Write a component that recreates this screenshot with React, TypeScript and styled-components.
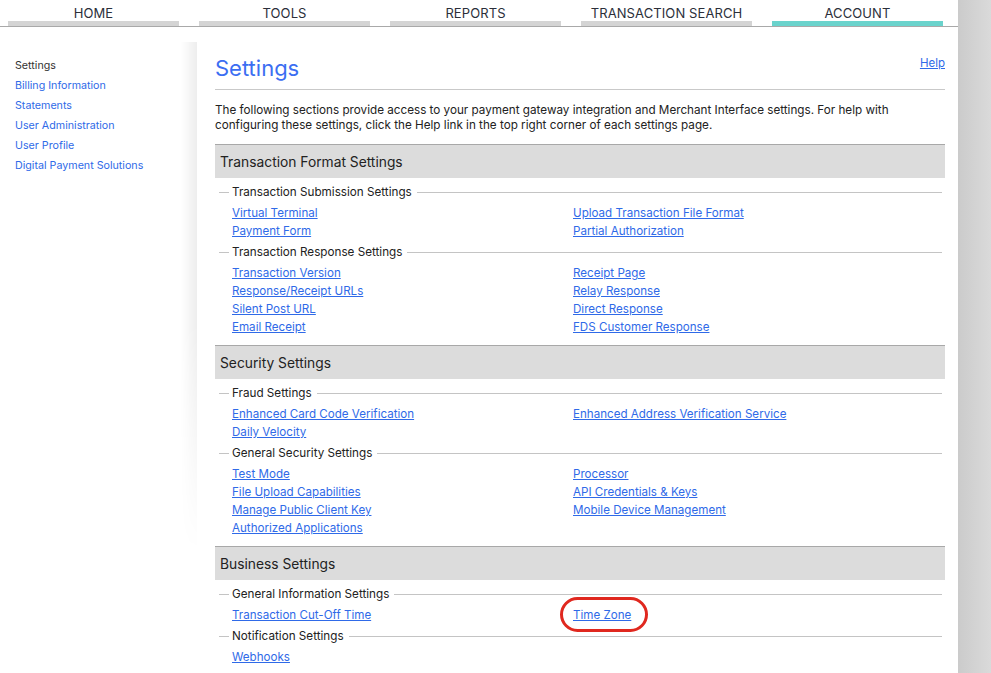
import React from "react";
import styled, { createGlobalStyle } from "styled-components";

const Global = createGlobalStyle`
  html, body { margin: 0; padding: 0; }
  body {
    font-family: Inter, "Noto Sans", "Liberation Sans", sans-serif;
    color: #222;
    background: #fff;
  }
`;

const Shell = styled.div`
  display: flex;
  min-height: 100vh;
`;

const Page = styled.div`
  width: 958px;
  flex: none;
  background: #fff;
`;

const Gutter = styled.div`
  flex: 1;
  background: linear-gradient(to right, #cbcbcb, #dadada);
`;

const Nav = styled.nav`
  display: flex;
  gap: 20px;
  padding-left: 8px;
  border-bottom: 1px solid #a9a9a9;
  height: 26px;
`;

const Tab = styled.div<{ $active?: boolean }>`
  width: 171px;
  height: 26px;
  box-sizing: border-box;
  border-bottom: 5px solid ${(p) => (p.$active ? "#6ad3cc" : "#d4d4d4")};
  display: flex;
  align-items: center;
  justify-content: center;
  padding-top: 4px;
  font-size: 13px;
  color: #2b2f3a;
  letter-spacing: 0.1px;
`;

const Body = styled.div`
  display: flex;
  margin-top: 15px;
`;

const Sidebar = styled.aside`
  width: 197px;
  flex: none;
  box-sizing: border-box;
  padding: 14px 0 0 15px;
  position: relative;
  min-height: 510px;
  &::after {
    content: "";
    position: absolute;
    top: 0;
    right: 0;
    width: 16px;
    height: 510px;
    background: linear-gradient(to right, rgba(0, 0, 0, 0), rgba(0, 0, 0, 0.07));
    -webkit-mask-image: linear-gradient(to bottom, #000 0%, #000 55%, transparent 100%);
    mask-image: linear-gradient(to bottom, #000 0%, #000 55%, transparent 100%);
  }
`;

const SideItem = styled.a<{ $current?: boolean }>`
  display: block;
  font-size: 10.7px;
  line-height: 20px;
  color: ${(p) => (p.$current ? "#333" : "#2f6ae8")};
  text-decoration: none;
`;

const Main = styled.main`
  flex: 1;
  padding: 0 13px 0 18px;
`;

const TitleRow = styled.div`
  display: flex;
  justify-content: space-between;
  align-items: flex-start;
  height: 48px;
  box-sizing: border-box;
  padding-top: 13px;
  border-bottom: 1px solid #c9c9c9;
`;

const Title = styled.h1`
  margin: 0;
  font-size: 22px;
  line-height: 26px;
  font-weight: 400;
  color: #3b6ef2;
`;

const Help = styled.a`
  font-size: 11.5px;
  line-height: 14px;
  margin-top: 1px;
  color: #2f6ae8;
  text-decoration: underline;
`;

const Intro = styled.p`
  margin: 13px 0 11px;
  font-size: 11.7px;
  line-height: 15px;
  color: #222;
`;

const Section = styled.section`
  padding-bottom: 9px;
`;

const SectionHeader = styled.h2`
  margin: 0 0 2px;
  height: 34px;
  box-sizing: border-box;
  border-top: 1px solid #a8a8a8;
  background: #dcdcdc;
  display: flex;
  align-items: center;
  padding-left: 5px;
  font-size: 13.8px;
  font-weight: 400;
  color: #222;
`;

const Fieldset = styled.div`
  padding-top: 4px;
`;

const LegendRow = styled.div`
  display: flex;
  align-items: center;
  height: 16px;
  padding: 0 3px 0 4px;
`;

const Dash = styled.span`
  width: 10px;
  height: 1px;
  background: #c4c4c4;
`;

const Legend = styled.span`
  font-size: 11.7px;
  color: #222;
  padding: 0 5px 0 3px;
  white-space: nowrap;
`;

const Rule = styled.span`
  flex: 1;
  height: 1px;
  background: #c4c4c4;
`;

const LinkGrid = styled.div`
  margin-top: 4px;
  display: grid;
  grid-template-columns: 341px 1fr;
  grid-auto-rows: 18px;
  padding-left: 17px;
`;

const Cell = styled.div`
  display: flex;
  align-items: center;
`;

const Link = styled.a`
  font-size: 11.6px;
  color: #2f6ae8;
  text-decoration: underline;
  text-underline-offset: 1px;
`;

const Circled = styled.span`
  position: relative;
  display: inline-flex;
  &::after {
    content: "";
    position: absolute;
    inset: -11px -17px -10px -13px;
    border: 3.5px solid #e0281f;
    border-radius: 20px;
    pointer-events: none;
  }
`;

type Group = { legend: string; left: string[]; right: string[]; circled?: string };
type Sec = { title: string; groups: Group[] };

const sections: Sec[] = [
  {
    title: "Transaction Format Settings",
    groups: [
      {
        legend: "Transaction Submission Settings",
        left: ["Virtual Terminal", "Payment Form"],
        right: ["Upload Transaction File Format", "Partial Authorization"],
      },
      {
        legend: "Transaction Response Settings",
        left: ["Transaction Version", "Response/Receipt URLs", "Silent Post URL", "Email Receipt"],
        right: ["Receipt Page", "Relay Response", "Direct Response", "FDS Customer Response"],
      },
    ],
  },
  {
    title: "Security Settings",
    groups: [
      {
        legend: "Fraud Settings",
        left: ["Enhanced Card Code Verification", "Daily Velocity"],
        right: ["Enhanced Address Verification Service"],
      },
      {
        legend: "General Security Settings",
        left: ["Test Mode", "File Upload Capabilities", "Manage Public Client Key", "Authorized Applications"],
        right: ["Processor", "API Credentials & Keys", "Mobile Device Management"],
      },
    ],
  },
  {
    title: "Business Settings",
    groups: [
      {
        legend: "General Information Settings",
        left: ["Transaction Cut-Off Time"],
        right: ["Time Zone"],
        circled: "Time Zone",
      },
      {
        legend: "Notification Settings",
        left: ["Webhooks"],
        right: [],
      },
    ],
  },
];

const tabs = ["HOME", "TOOLS", "REPORTS", "TRANSACTION SEARCH", "ACCOUNT"];
const side = ["Billing Information", "Statements", "User Administration", "User Profile", "Digital Payment Solutions"];

function GroupBlock({ g }: { g: Group }) {
  const rows = Math.max(g.left.length, g.right.length);
  const cells: React.ReactNode[] = [];
  for (let i = 0; i < rows; i++) {
    const l = g.left[i];
    const r = g.right[i];
    cells.push(
      <Cell key={"l" + i}>{l ? <Link href="#">{l}</Link> : null}</Cell>,
      <Cell key={"r" + i}>
        {r ? (
          r === g.circled ? (
            <Circled>
              <Link href="#">{r}</Link>
            </Circled>
          ) : (
            <Link href="#">{r}</Link>
          )
        ) : null}
      </Cell>
    );
  }
  return (
    <Fieldset>
      <LegendRow>
        <Dash />
        <Legend>{g.legend}</Legend>
        <Rule />
      </LegendRow>
      <LinkGrid>{cells}</LinkGrid>
    </Fieldset>
  );
}

export default function App() {
  return (
    <Shell>
      <Global />
      <Page>
        <Nav>
          {tabs.map((t) => (
            <Tab key={t} $active={t === "ACCOUNT"}>
              {t}
            </Tab>
          ))}
        </Nav>
        <Body>
          <Sidebar>
            <SideItem $current>Settings</SideItem>
            {side.map((s) => (
              <SideItem key={s} href="#">
                {s}
              </SideItem>
            ))}
          </Sidebar>
          <Main>
            <TitleRow>
              <Title>Settings</Title>
              <Help href="#">Help</Help>
            </TitleRow>
            <Intro>
              The following sections provide access to your payment gateway integration and Merchant Interface settings. For help with
              configuring these settings, click the Help link in the top right corner of each settings page.
            </Intro>
            {sections.map((s) => (
              <Section key={s.title}>
                <SectionHeader>{s.title}</SectionHeader>
                {s.groups.map((g) => (
                  <GroupBlock key={g.legend} g={g} />
                ))}
              </Section>
            ))}
          </Main>
        </Body>
      </Page>
      <Gutter />
    </Shell>
  );
}
